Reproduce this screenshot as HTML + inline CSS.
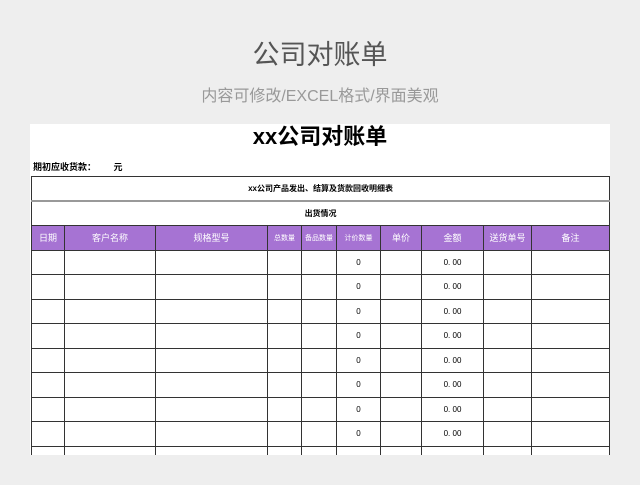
<!DOCTYPE html>
<html><head><meta charset="utf-8"><style>
*{margin:0;padding:0;box-sizing:border-box}
body{width:640px;height:485px;background:#eeeeee;position:relative;overflow:hidden;font-family:"Liberation Sans","Noto Sans CJK SC",sans-serif}
.t1{position:absolute;top:37px;left:0;width:640px;text-align:center;font-size:27px;color:#555;line-height:36px}
.t2{position:absolute;top:87px;left:0;width:640px;text-align:center;font-size:16px;color:#999;line-height:20px}
.sheet{position:absolute;left:30px;top:124px;width:580px;height:331px;background:#fff;overflow:hidden}
.h{position:absolute;left:0;top:0;width:580px;text-align:center;font-size:22px;font-weight:bold;line-height:26px}
.init{position:absolute;left:3px;top:36px;font-size:9px;font-weight:bold}
table{position:absolute;left:1px;top:52px;border-collapse:collapse;table-layout:fixed;width:578px}
td{border:1px solid #333;font-size:8px;text-align:center;height:24.5px;padding:0}
.b td{font-weight:bold}
.p td{background:#a673d3;color:#fff;font-size:9px}
.p td.s{font-size:7px}
</style></head><body>
<div class="t1">公司对账单</div>
<div class="t2">内容可修改/EXCEL格式/界面美观</div>
<div class="sheet">
<div class="h">xx公司对账单</div>
<div class="init">期初应收货款：&nbsp;&nbsp;&nbsp;&nbsp;&nbsp;&nbsp;&nbsp;元</div>
<table>
<colgroup><col style="width:33px"><col style="width:91px"><col style="width:112px"><col style="width:34px"><col style="width:35px"><col style="width:44px"><col style="width:41px"><col style="width:62px"><col style="width:48px"><col style="width:78px"></colgroup>
<tr class="b"><td colspan="10" style="border-bottom:2px solid #999">xx公司产品发出、结算及货款回收明细表</td></tr>
<tr class="b"><td colspan="10">出货情况</td></tr>
<tr class="p"><td>日期</td><td>客户名称</td><td>规格型号</td><td class="s">总数量</td><td class="s">备品数量</td><td class="s">计价数量</td><td>单价</td><td>金额</td><td>送货单号</td><td>备注</td></tr>
<tr><td></td><td></td><td></td><td></td><td></td><td>0</td><td></td><td>0. 00</td><td></td><td></td></tr>
<tr><td></td><td></td><td></td><td></td><td></td><td>0</td><td></td><td>0. 00</td><td></td><td></td></tr>
<tr><td></td><td></td><td></td><td></td><td></td><td>0</td><td></td><td>0. 00</td><td></td><td></td></tr>
<tr><td></td><td></td><td></td><td></td><td></td><td>0</td><td></td><td>0. 00</td><td></td><td></td></tr>
<tr><td></td><td></td><td></td><td></td><td></td><td>0</td><td></td><td>0. 00</td><td></td><td></td></tr>
<tr><td></td><td></td><td></td><td></td><td></td><td>0</td><td></td><td>0. 00</td><td></td><td></td></tr>
<tr><td></td><td></td><td></td><td></td><td></td><td>0</td><td></td><td>0. 00</td><td></td><td></td></tr>
<tr><td></td><td></td><td></td><td></td><td></td><td>0</td><td></td><td>0. 00</td><td></td><td></td></tr>
<tr><td></td><td></td><td></td><td></td><td></td><td>0</td><td></td><td>0. 00</td><td></td><td></td></tr>
<tr><td></td><td></td><td></td><td></td><td></td><td>0</td><td></td><td>0. 00</td><td></td><td></td></tr>
</table>
</div>
</body></html>
